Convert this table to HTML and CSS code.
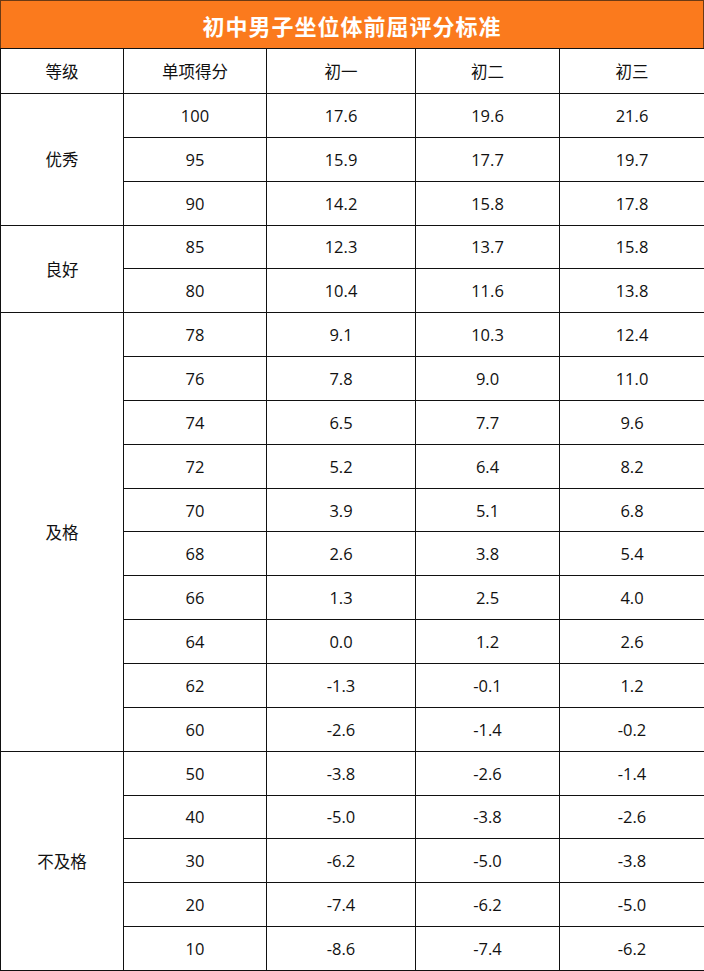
FILE: index.html
```html
<!DOCTYPE html>
<html lang="zh">
<head>
<meta charset="utf-8">
<link rel="stylesheet" href="styles.css">
</head>
<body>
<div class="sheet">
  <div class="title">初中男子坐位体前屈评分标准</div>
  <table class="grid">
    <colgroup>
      <col class="c1"><col class="c2"><col class="c3"><col class="c4"><col class="c5">
    </colgroup>
    <thead>
      <tr class="head"><th>等级</th><th>单项得分</th><th>初一</th><th>初二</th><th>初三</th></tr>
    </thead>
    <tbody>
      <tr><td rowspan="3">优秀</td><td>100</td><td>17.6</td><td>19.6</td><td>21.6</td></tr>
      <tr><td>95</td><td>15.9</td><td>17.7</td><td>19.7</td></tr>
      <tr><td>90</td><td>14.2</td><td>15.8</td><td>17.8</td></tr>
      <tr><td rowspan="2">良好</td><td>85</td><td>12.3</td><td>13.7</td><td>15.8</td></tr>
      <tr><td>80</td><td>10.4</td><td>11.6</td><td>13.8</td></tr>
      <tr><td rowspan="10">及格</td><td>78</td><td>9.1</td><td>10.3</td><td>12.4</td></tr>
      <tr><td>76</td><td>7.8</td><td>9.0</td><td>11.0</td></tr>
      <tr><td>74</td><td>6.5</td><td>7.7</td><td>9.6</td></tr>
      <tr><td>72</td><td>5.2</td><td>6.4</td><td>8.2</td></tr>
      <tr><td>70</td><td>3.9</td><td>5.1</td><td>6.8</td></tr>
      <tr><td>68</td><td>2.6</td><td>3.8</td><td>5.4</td></tr>
      <tr><td>66</td><td>1.3</td><td>2.5</td><td>4.0</td></tr>
      <tr><td>64</td><td>0.0</td><td>1.2</td><td>2.6</td></tr>
      <tr><td>62</td><td>-1.3</td><td>-0.1</td><td>1.2</td></tr>
      <tr><td>60</td><td>-2.6</td><td>-1.4</td><td>-0.2</td></tr>
      <tr><td rowspan="5">不及格</td><td>50</td><td>-3.8</td><td>-2.6</td><td>-1.4</td></tr>
      <tr><td>40</td><td>-5.0</td><td>-3.8</td><td>-2.6</td></tr>
      <tr><td>30</td><td>-6.2</td><td>-5.0</td><td>-3.8</td></tr>
      <tr><td>20</td><td>-7.4</td><td>-6.2</td><td>-5.0</td></tr>
      <tr><td>10</td><td>-8.6</td><td>-7.4</td><td>-6.2</td></tr>
    </tbody>
  </table>
</div>
</body>
</html>
```
FILE: styles.css
```css
html, body {
  margin: 0;
  padding: 0;
  background: #ffffff;
}
.sheet {
  width: 704px;
  font-family: "Open Sans", "Noto Sans CJK SC", sans-serif;
  color: #111111;
}
.title {
  box-sizing: border-box;
  height: 48px;
  background: #fb7a1d;
  border: 1px solid #6b3a14;
  border-bottom: none;
  color: #ffffff;
  font-family: "Noto Sans CJK SC", sans-serif;
  font-weight: 700;
  font-size: 22px;
  display: flex;
  align-items: center;
  justify-content: center;
  letter-spacing: 1px;
}
.grid {
  width: 704px;
  border-collapse: collapse;
  table-layout: fixed;
  font-size: 16.5px;
}
.c1 { width: 123px; }
.c2 { width: 143px; }
.c3 { width: 149px; }
.c4 { width: 144px; }
.c5 { width: 145px; }
.grid th, .grid td {
  border: 1px solid #111111;
  text-align: center;
  vertical-align: middle;
  padding: 0;
  font-weight: 400;
}
.grid th {
  font-family: "Noto Sans CJK SC", sans-serif;
  font-size: 16.5px;
}
.grid tr.head th {
  height: 44px;
}
.grid tbody td {
  height: 42.85px;
}
.grid tbody td[rowspan] {
  font-family: "Noto Sans CJK SC", sans-serif;
  font-size: 16.5px;
}
```
